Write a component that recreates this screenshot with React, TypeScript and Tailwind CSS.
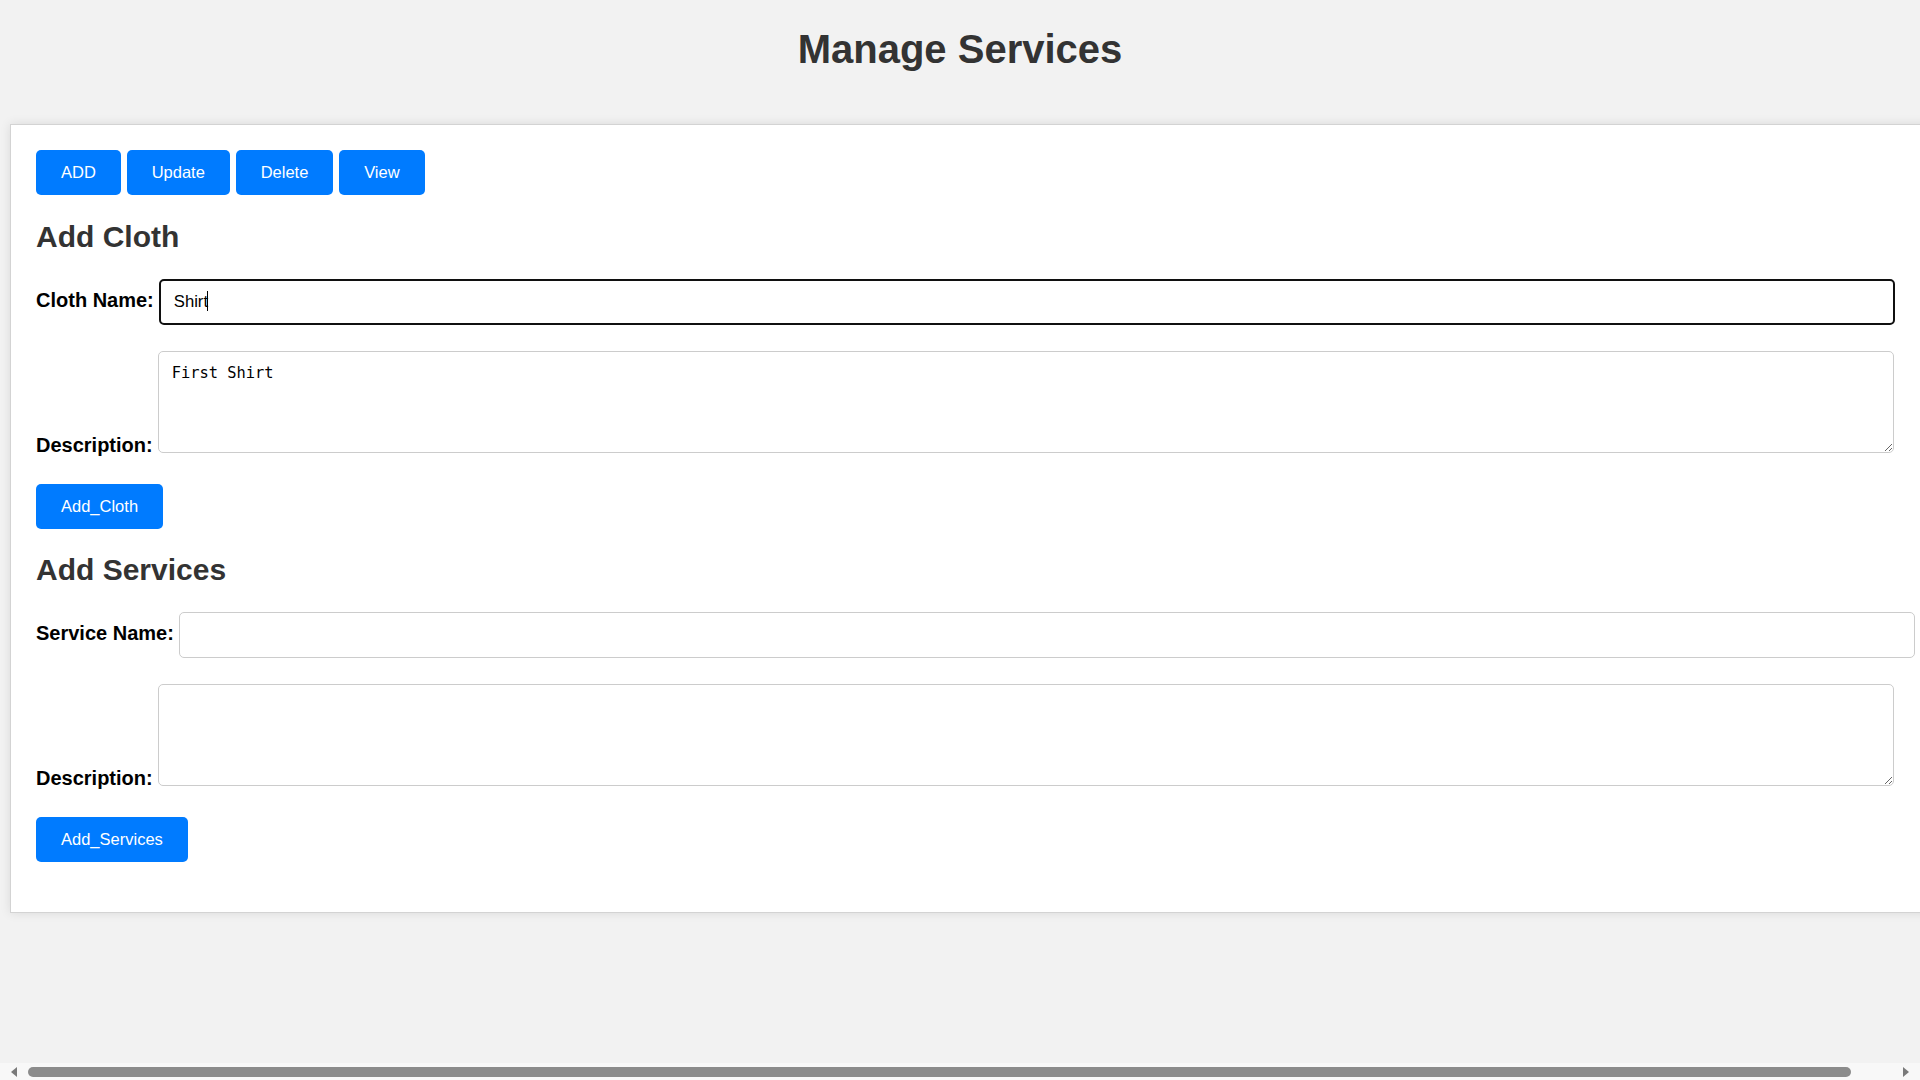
import React from "react";

const btn =
  "h-[45px] px-[25px] pb-[1px] bg-[#007bff] text-white text-[16.5px] leading-[20px] rounded-[5px] whitespace-nowrap shrink-0";

function NameRow({
  label,
  value,
  focused,
}: {
  label: string;
  value: string;
  focused?: boolean;
}) {
  return (
    <div className="flex items-baseline gap-[5.5px]">
      <label className="text-[20px] font-bold leading-[23px] text-black whitespace-nowrap">{label}</label>
      <div className="relative shrink-0">
        <input
          type="text"
          defaultValue={value}
          className={
            focused
              ? "block w-[1736px] h-[46px] border-2 border-[#101010] rounded-[5px] px-[12.5px] text-[16.67px] text-black bg-white outline-none font-['Liberation_Sans',Arial,sans-serif]"
              : "block w-[1736px] h-[46px] border border-[#cccccc] rounded-[5px] px-[12.5px] text-[16.67px] text-black bg-white outline-none font-['Liberation_Sans',Arial,sans-serif]"
          }
        />
        {focused && <span className="absolute left-[48px] top-[12px] w-px h-[20px] bg-black" />}
      </div>
    </div>
  );
}

function DescRow({ value }: { value: string }) {
  return (
    <div className="flex items-end gap-[5.5px] mt-[26px]">
      <label className="text-[20px] font-bold leading-[23px] text-black whitespace-nowrap translate-y-[4px]">
        Description:
      </label>
      <textarea
        defaultValue={value}
        className="block shrink-0 w-[1736px] h-[102px] border border-[#cccccc] rounded-[5px] px-[12.5px] py-[12.5px] text-[15.4px] leading-[19.5px] text-black bg-white outline-none font-['DejaVu_Sans_Mono','Liberation_Mono',monospace]"
      />
    </div>
  );
}

export default function App() {
  return (
    <div className="w-[1920px] h-[1080px] flex flex-col overflow-hidden bg-[#f2f2f2] font-['Liberation_Sans',Arial,sans-serif]">
      <div className="flex-1 min-h-0 overflow-hidden px-[10px]">
        <h1 className="mt-[26px] text-center text-[40px] leading-[46px] font-bold text-[#333333]">
          Manage Services
        </h1>
        <div className="mt-[52px] w-[1952px] bg-white border border-[#d3d3d3] shadow-[0_0_10px_rgba(0,0,0,0.1)] px-[25px] pt-[25px] pb-[50px]">
          <div className="flex gap-[5.8px]">
            <button className={btn}>ADD</button>
            <button className={btn}>Update</button>
            <button className={btn}>Delete</button>
            <button className={btn}>View</button>
          </div>

          <h2 className="mt-[24.5px] mb-[25px] text-[30px] leading-[34px] font-bold text-[#333333]">Add Cloth</h2>
          <NameRow label="Cloth Name:" value="Shirt" focused />
          <DescRow value="First Shirt" />
          <div className="mt-[31px]">
            <button className={btn}>Add_Cloth</button>
          </div>

          <h2 className="mt-[24.5px] mb-[25px] text-[30px] leading-[34px] font-bold text-[#333333]">Add Services</h2>
          <NameRow label="Service Name:" value="" />
          <DescRow value="" />
          <div className="mt-[31px]">
            <button className={btn}>Add_Services</button>
          </div>
        </div>
      </div>

      <div className="h-[17px] shrink-0 bg-[#f8f8f8] flex items-center">
        <div className="w-[28px] h-full flex items-center justify-center">
          <svg width="8" height="10" viewBox="0 0 8 10">
            <polygon points="7,0 7,10 1,5" fill="#7a7a7a" />
          </svg>
        </div>
        <div className="w-[1823px] h-[10px] rounded-full bg-[#8b8b8b]" />
        <div className="flex-1 h-full flex items-center justify-end pr-[10px]">
          <svg width="8" height="10" viewBox="0 0 8 10">
            <polygon points="1,0 1,10 7,5" fill="#7a7a7a" />
          </svg>
        </div>
      </div>
    </div>
  );
}
